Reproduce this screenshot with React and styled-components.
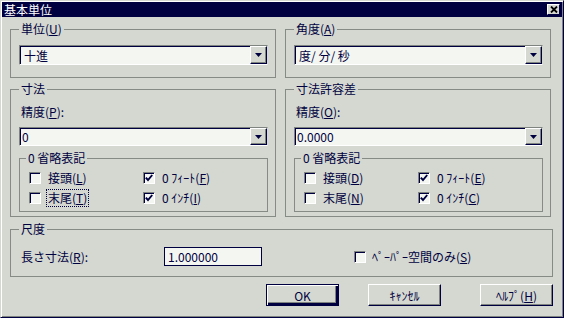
import React from "react";
import styled, { createGlobalStyle } from "styled-components";

const FACE = "#d4d8d0";
const INK = "#000040";
const FIELD = "#f4f6f2";
const LINE = "#878b85";
const SHADOW = "#808480";

const GlobalStyle = createGlobalStyle`
  html, body {
    margin: 0;
    background: ${FACE};
  }
  body {
    font-family: "Noto Sans CJK JP", "Noto Sans", sans-serif;
    font-size: 12px;
    color: ${INK};
  }
`;

const Window = styled.div`
  box-sizing: border-box;
  width: 564px;
  height: 318px;
  padding: 1px;
  background: ${FACE};
  border: 1px solid;
  border-color: ${FACE} ${INK} ${INK} ${FACE};
  box-shadow: inset 1px 1px #ffffff, inset -1px -1px ${SHADOW};
  display: flex;
  flex-direction: column;
`;

const TitleBar = styled.div`
  height: 15px;
  background: ${INK};
  color: #ffffff;
  display: flex;
  align-items: center;
  justify-content: space-between;
  padding: 0 2px;
  line-height: 15px;
`;

const CloseButton = styled.div`
  box-sizing: border-box;
  width: 13px;
  height: 11px;
  background: ${FACE};
  border: 1px solid;
  border-color: #ffffff ${INK} ${INK} #ffffff;
  display: flex;
  align-items: center;
  justify-content: center;
`;

const Content = styled.div`
  display: flex;
  flex-direction: column;
  padding: 5px 9px 0 8px;
`;

const Pair = styled.div`
  display: grid;
  grid-template-columns: 266px 266px;
  column-gap: 9px;
  margin-top: ${(p) => p.$mt || 0}px;
`;

const Group = styled.fieldset`
  box-sizing: border-box;
  margin: ${(p) => p.$mt || 0}px 0 0 0;
  min-width: 0;
  height: ${(p) => p.$h}px;
  padding: 0 ${(p) => p.$pr ?? 7}px 0 ${(p) => p.$pl ?? 8}px;
  border: 1px solid ${LINE};
`;

const Legend = styled.legend`
  padding: 0 2px;
  margin-left: ${(p) => p.$shift || 0}px;
  line-height: 14px;
`;

const Key = styled.span`
  text-decoration: underline;
  text-underline-offset: 1px;
`;

const Label = styled.div`
  line-height: 14px;
  padding-left: 2px;
  margin-top: ${(p) => p.$mt || 0}px;
  white-space: nowrap;
`;

const Combo = styled.div`
  box-sizing: border-box;
  display: flex;
  height: ${(p) => p.$h}px;
  margin-top: ${(p) => p.$mt || 0}px;
  background: ${FIELD};
  border: 1px solid;
  border-color: ${SHADOW} ${FACE} #ffffff ${SHADOW};
  box-shadow: inset 1px 1px ${INK};
`;

const ComboText = styled.div`
  flex: 1;
  display: flex;
  align-items: center;
  padding-left: ${(p) => p.$pl ?? 4}px;
  white-space: nowrap;
`;

const ComboButton = styled.div`
  box-sizing: border-box;
  width: 17px;
  background: ${FACE};
  border: 1px solid;
  border-color: #ffffff ${INK} ${INK} #ffffff;
  box-shadow: inset -1px -1px ${SHADOW};
  display: flex;
  align-items: center;
  justify-content: center;
`;

const Checks = styled.div`
  display: grid;
  grid-template-columns: 114px auto;
  row-gap: 6px;
  margin-top: 6px;
`;

const CheckItem = styled.div`
  display: flex;
  align-items: center;
  height: 14px;
  margin-left: ${(p) => p.$ml || 0}px;
  white-space: nowrap;
`;

const Box = styled.div`
  box-sizing: border-box;
  width: 12px;
  height: 12px;
  margin-right: ${(p) => p.$gap ?? 7}px;
  background: ${FIELD};
  border: 1px solid;
  border-color: ${SHADOW} #ffffff #ffffff ${SHADOW};
  box-shadow: inset 1px 1px ${INK};
  display: flex;
  align-items: center;
  justify-content: center;
  flex: none;
`;

const CheckText = styled.span`
  line-height: 14px;
  outline: ${(p) => (p.$focused ? `1px dotted ${INK}` : "none")};
  outline-offset: 1px;
`;

const ScaleRow = styled.div`
  display: flex;
  align-items: center;
  height: 19px;
  margin-top: 11px;
`;

const ScaleLabel = styled(Label)`
  width: 143px;
`;

const Input = styled.div`
  box-sizing: border-box;
  width: 98px;
  height: 19px;
  padding-left: 3px;
  background: ${FIELD};
  border: 1px solid ${INK};
  display: flex;
  align-items: center;
`;

const Buttons = styled.div`
  display: flex;
  justify-content: flex-end;
  margin-top: 7px;
`;

const Button = styled.div`
  box-sizing: border-box;
  width: 73px;
  height: 22px;
  margin-left: ${(p) => p.$ml || 0}px;
  background: ${FACE};
  border: 1px solid;
  border-color: ${(p) => (p.$default ? `${INK}` : `#ffffff ${INK} ${INK} #ffffff`)};
  box-shadow: ${(p) =>
    p.$default
      ? `inset 1px 1px #ffffff, inset -2px -2px ${INK}, inset -3px -3px ${SHADOW}`
      : `inset -1px -1px ${SHADOW}`};
  display: flex;
  align-items: center;
  justify-content: center;
  white-space: nowrap;
  font-family: "Noto Sans CJK JP", "Liberation Sans", sans-serif;
`;

const Arrow = () => (
  <svg width="7" height="4" viewBox="0 0 7 4">
    <path d="M0 0h7L3.5 4z" fill={INK} />
  </svg>
);

const Tick = () => (
  <svg width="8" height="8" viewBox="0 0 8 8">
    <path d="M0.8 3.6 L3 6 L7.2 1" fill="none" stroke={INK} strokeWidth="1.9" />
  </svg>
);

const CloseX = () => (
  <svg width="8" height="7" viewBox="0 0 8 7">
    <path d="M1 0.5 L7 6.5 M7 0.5 L1 6.5" stroke="#000" strokeWidth="1.8" />
  </svg>
);

const Check = ({ checked, focused, ml, gap, children }) => (
  <CheckItem $ml={ml}>
    <Box $gap={gap}>{checked && <Tick />}</Box>
    <CheckText $focused={focused}>{children}</CheckText>
  </CheckItem>
);

const ZeroGroup = ({ items }) => (
  <Group $h={61} $mt={5} $pl={9} $pr={9}>
    <Legend $shift={-3}>0 省略表記</Legend>
    <Checks>
      {items.map((it) => (
        <Check key={it.text + it.key} checked={it.checked} focused={it.focused}>
          {it.text}(<Key>{it.key}</Key>)
        </Check>
      ))}
    </Checks>
  </Group>
);

const leftZero = [
  { text: "接頭", key: "L" },
  { text: "0 ﾌｨｰﾄ", key: "F", checked: true },
  { text: "末尾", key: "T", focused: true },
  { text: "0 ｲﾝﾁ", key: "I", checked: true },
];

const rightZero = [
  { text: "接頭", key: "D" },
  { text: "0 ﾌｨｰﾄ", key: "E", checked: true },
  { text: "末尾", key: "N" },
  { text: "0 ｲﾝﾁ", key: "C", checked: true },
];

export default function App() {
  return (
    <>
      <GlobalStyle />
      <Window>
        <TitleBar>
          <span>基本単位</span>
          <CloseButton>
            <CloseX />
          </CloseButton>
        </TitleBar>
        <Content>
          <Pair>
            <Group $h={56}>
              <Legend>
                単位(<Key>U</Key>)
              </Legend>
              <Combo $h={20} $mt={9}>
                <ComboText>十進</ComboText>
                <ComboButton>
                  <Arrow />
                </ComboButton>
              </Combo>
            </Group>
            <Group $h={56}>
              <Legend>
                角度(<Key>A</Key>)
              </Legend>
              <Combo $h={20} $mt={9}>
                <ComboText>度/ 分/ 秒</ComboText>
                <ComboButton>
                  <Arrow />
                </ComboButton>
              </Combo>
            </Group>
          </Pair>

          <Pair $mt={4}>
            <Group $h={135}>
              <Legend>寸法</Legend>
              <Label $mt={9}>
                精度(<Key>P</Key>):
              </Label>
              <Combo $h={19} $mt={8}>
                <ComboText $pl={2}>0</ComboText>
                <ComboButton>
                  <Arrow />
                </ComboButton>
              </Combo>
              <ZeroGroup items={leftZero} />
            </Group>
            <Group $h={135}>
              <Legend>寸法許容差</Legend>
              <Label $mt={9}>
                精度(<Key>O</Key>):
              </Label>
              <Combo $h={19} $mt={8}>
                <ComboText $pl={2}>0.0000</ComboText>
                <ComboButton>
                  <Arrow />
                </ComboButton>
              </Combo>
              <ZeroGroup items={rightZero} />
            </Group>
          </Pair>

          <Group $h={55} $mt={5}>
            <Legend>尺度</Legend>
            <ScaleRow>
              <ScaleLabel>
                長さ寸法(<Key>R</Key>):
              </ScaleLabel>
              <Input>1.000000</Input>
              <Check ml={92} gap={6}>
                ﾍﾟｰﾊﾟｰ空間のみ(<Key>S</Key>)
              </Check>
            </ScaleRow>
          </Group>

          <Buttons>
            <Button $default>OK</Button>
            <Button $ml={29}>ｷｬﾝｾﾙ</Button>
            <Button $ml={39}>
              ﾍﾙﾌﾟ(<Key>H</Key>)
            </Button>
          </Buttons>
        </Content>
      </Window>
    </>
  );
}
